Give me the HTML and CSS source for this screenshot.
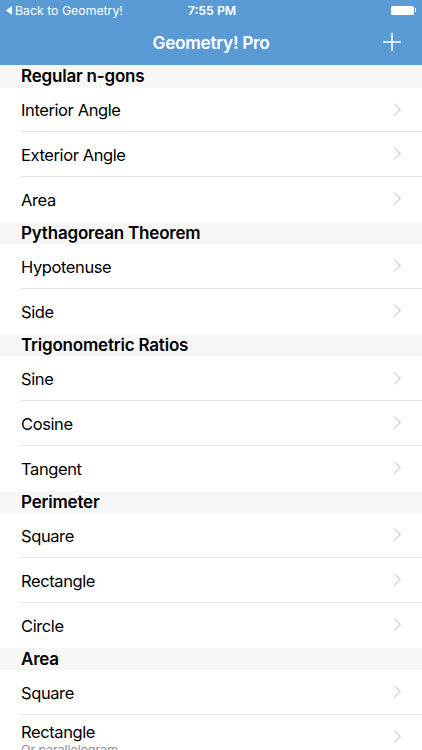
FILE: index.html
```html
<!DOCTYPE html>
<html lang="en">
<head>
  <meta charset="UTF-8">
  <meta name="viewport" content="width=device-width, initial-scale=1.0">
  <title>Geometry! Pro</title>
  <link rel="stylesheet" href="styles.css">
</head>
<body>
  <header class="topbar">
    <div class="status">
      <span class="status-back">
        <svg class="back-tri" width="6" height="9" viewBox="0 0 6 9"><path d="M6 0 L0 4.5 L6 9 Z" fill="#fff"/></svg>
        Back to Geometry!
      </span>
      <span class="status-time">7:55 PM</span>
      <span class="battery"><span class="battery-body"></span><span class="battery-nub"></span></span>
    </div>
    <div class="nav">
      <h1 class="nav-title">Geometry! Pro</h1>
      <svg class="nav-add" width="20" height="20" viewBox="0 0 20 20">
        <path d="M10 1 V19 M1 10 H19" stroke="#fff" stroke-width="1.6" fill="none"/>
      </svg>
    </div>
  </header>

  <main class="list">
    <h2 class="section">Regular n-gons</h2>
    <a class="row">Interior Angle<span class="chev"></span></a>
    <a class="row">Exterior Angle<span class="chev"></span></a>
    <a class="row last">Area<span class="chev"></span></a>

    <h2 class="section">Pythagorean Theorem</h2>
    <a class="row">Hypotenuse<span class="chev"></span></a>
    <a class="row last">Side<span class="chev"></span></a>

    <h2 class="section">Trigonometric Ratios</h2>
    <a class="row">Sine<span class="chev"></span></a>
    <a class="row">Cosine<span class="chev"></span></a>
    <a class="row last">Tangent<span class="chev"></span></a>

    <h2 class="section">Perimeter</h2>
    <a class="row">Square<span class="chev"></span></a>
    <a class="row">Rectangle<span class="chev"></span></a>
    <a class="row last">Circle<span class="chev"></span></a>

    <h2 class="section">Area</h2>
    <a class="row">Square<span class="chev"></span></a>
    <a class="row two-line">
      <span class="row-text">
        <span>Rectangle</span>
        <span class="row-sub">Or parallelogram</span>
      </span>
      <span class="chev"></span>
    </a>
  </main>
</body>
</html>
```

FILE: styles.css
```css
body {
  margin: 0;
  width: 422px;
  height: 750px;
  overflow: hidden;
  background-color: #fff;
  font-family: Inter, "Liberation Sans", sans-serif;
  color: #000;
}

.topbar {
  background-color: #5a9bd5;
  color: #fff;
}

.status {
  height: 20.4px;
  display: grid;
  grid-template-columns: 1fr auto 1fr;
  align-items: center;
  padding: 0 6px;
  font-size: 12.3px;
}

.status-back {
  display: flex;
  align-items: center;
  gap: 3px;
}

.status-time {
  font-weight: 600;
  padding-left: 2px;
}

.battery {
  justify-self: end;
  display: flex;
  align-items: center;
}

.battery-body {
  width: 23px;
  height: 9px;
  background-color: #fff;
  border-radius: 1.5px;
}

.battery-nub {
  width: 1.5px;
  height: 3.5px;
  background-color: #fff;
  margin-left: 1px;
}

.nav {
  height: 44.8px;
  display: flex;
  align-items: center;
  justify-content: center;
  position: relative;
}

.nav-title {
  margin: 0;
  font-size: 17.3px;
  font-weight: 600;
  letter-spacing: -0.3px;
}

.nav-add {
  position: absolute;
  right: 20px;
  top: 12px;
}

.section {
  margin: 0;
  height: 22.4px;
  line-height: 22.4px;
  padding-left: 21px;
  background-color: #f7f7f7;
  font-size: 17px;
  font-weight: 600;
  letter-spacing: -0.2px;
}

.row {
  display: flex;
  align-items: center;
  justify-content: space-between;
  height: 44.85px;
  margin-left: 21px;
  padding-right: 23px;
  font-size: 16.5px;
  letter-spacing: -0.4px;
  box-shadow: inset 0 -1px 0 #e3e3e6;
}

.row.last {
  box-shadow: none;
}

.chev {
  width: 8px;
  height: 8px;
  border-top: 1.6px solid #c7c7cc;
  border-right: 1.6px solid #c7c7cc;
  transform: rotate(45deg);
  margin-top: -2px;
}

.row-text {
  display: flex;
  flex-direction: column;
  padding-top: 3px;
}

.row-sub {
  font-size: 12.3px;
  letter-spacing: 0;
  color: #8e8e93;
}
```
